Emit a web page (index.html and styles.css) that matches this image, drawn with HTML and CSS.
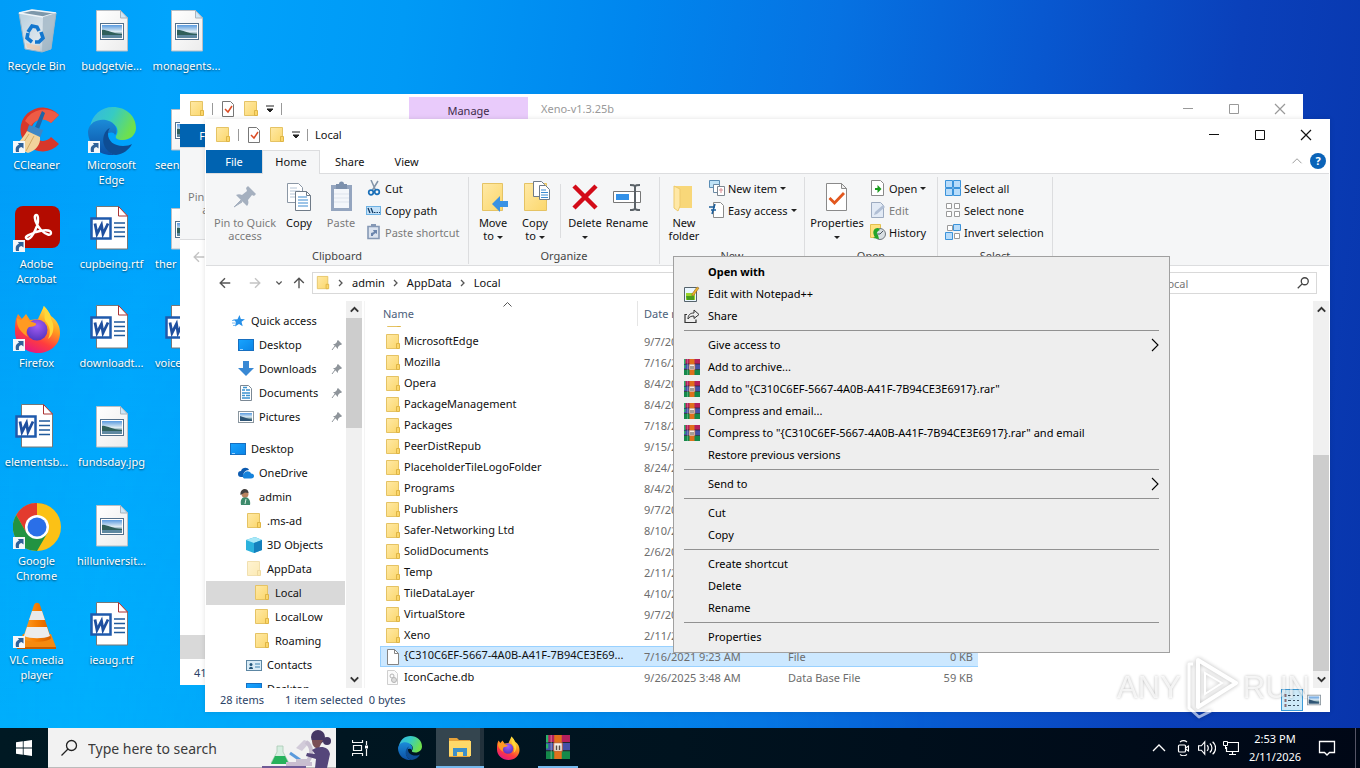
FILE: index.html
```html
<!DOCTYPE html>
<html lang="en">
<head>
<meta charset="utf-8">
<title>Desktop</title>
<link rel="stylesheet" href="styles.css">
</head>
<body>
<svg class="defs" aria-hidden="true">
  <defs>
    <linearGradient id="gPaper" x1="0" y1="0" x2="1" y2="1"><stop offset="0" stop-color="#ffffff"/><stop offset="1" stop-color="#ececec"/></linearGradient>
    <linearGradient id="gPhoto" x1="0" y1="0" x2="0" y2="1"><stop offset="0" stop-color="#5a9be0"/><stop offset=".5" stop-color="#dceaf2"/><stop offset=".75" stop-color="#56808c"/><stop offset="1" stop-color="#35627c"/></linearGradient>
    <linearGradient id="gBin" x1="0" y1="0" x2="1" y2="1"><stop offset="0" stop-color="#b4cddd"/><stop offset=".6" stop-color="#dde6ec"/><stop offset="1" stop-color="#8fa6b6"/></linearGradient>
    <linearGradient id="gEdgeA" x1="0" y1="0" x2="1" y2=".4"><stop offset="0" stop-color="#35b5e5"/><stop offset=".5" stop-color="#36cbc4"/><stop offset="1" stop-color="#6ee04e"/></linearGradient>
    <linearGradient id="gEdgeB" x1="0" y1="0" x2="0" y2="1"><stop offset="0" stop-color="#1b8bd8"/><stop offset="1" stop-color="#0c4fa4"/></linearGradient>
    <linearGradient id="gFox" x1=".8" y1="0" x2=".3" y2="1"><stop offset="0" stop-color="#fff04a"/><stop offset=".4" stop-color="#ff9a1f"/><stop offset=".7" stop-color="#ff3d3d"/><stop offset="1" stop-color="#e31587"/></linearGradient>
    <radialGradient id="gFoxGlobe" cx=".5" cy=".3" r=".8"><stop offset="0" stop-color="#a45cf5"/><stop offset="1" stop-color="#4b30b8"/></radialGradient>
    <linearGradient id="gFolder" x1="0" y1="0" x2="1" y2="1"><stop offset="0" stop-color="#ffe9a6"/><stop offset="1" stop-color="#fbd76c"/></linearGradient>
    <linearGradient id="gCone" x1="0" y1="0" x2="1" y2="0"><stop offset="0" stop-color="#ffa02a"/><stop offset=".5" stop-color="#f57c00"/><stop offset="1" stop-color="#d65f00"/></linearGradient>
    <linearGradient id="gScreen" x1="0" y1="0" x2="1" y2="1"><stop offset="0" stop-color="#18a4ff"/><stop offset="1" stop-color="#0a84e6"/></linearGradient>
  </defs>
  <symbol id="shortcut" viewBox="0 0 12 12"><rect width="12" height="12" fill="#f4f7fa"/><path d="M3 11C2 6 4 4 6 4L5 2h5.500v5.500L8.500 6C6 6.500 5.500 8 6 11z" fill="#2f6199"/></symbol>
  <symbol id="d-image" viewBox="0 0 48 48"><path d="M8.500 2.500h24l7 7.500v33h-31z" fill="url(#gPaper)" stroke="#b9bec4"/><path d="M32.500 2.500v7.500h7z" fill="#cfe6f6" stroke="#a9b4bc"/><rect x="12.500" y="15.500" width="23" height="16" fill="#fff" stroke="#53708c"/><rect x="14" y="17" width="20" height="13" fill="url(#gPhoto)"/><path d="M14 22c4-1 10 4 20 4v4H14z" fill="#2f5f5a"/><path d="M14 27h20v3H14z" fill="#5e88a0"/></symbol>
  <symbol id="d-word" viewBox="0 0 48 48"><path d="M8.500.500h22l9 9.500v33h-31z" fill="#fff" stroke="#777"/><path d="M30.500.500v9.500h9z" fill="#fff" stroke="#a33"/><path d="M26 17h11M26 21.500h11M26 26h11M26 30.500h11" stroke="#1f5a9c" stroke-width="1.500"/><rect x="3.500" y="12.500" width="19" height="20" fill="#fff" stroke="#1f5aac" stroke-width="2.500"/><path d="M7 17.500l2 10.500 4.500-9 1.500 9 5-10.500" fill="none" stroke="#1f4f9f" stroke-width="2.800"/></symbol>
  <symbol id="d-bin" viewBox="0 0 48 48"><path d="M6 5l13-3 24 3-5 36-9 3-17-3z" fill="url(#gBin)" stroke="#9db4c4"/><path d="M6 5l13-3 24 3-13 4z" fill="#7d98ab" stroke="#eef4f8" stroke-width="1.500"/><path d="M30 9l13-4-5 36-9 3z" fill="#a1b6c5" opacity=".8"/><path d="M13 35l14 3v5l-13-3z" fill="#f0c8a8" opacity=".7"/><path d="M15 24l4-6 5 1 2 4M28 24l2 6-4 4h-4M19 34l-5-4 1-5" fill="none" stroke="#1377cf" stroke-width="3.600"/></symbol>
  <symbol id="d-ccleaner" viewBox="0 0 48 48"><path d="M46 8A22 22 0 1 0 46 37L38 30A11 11 0 1 1 38 16z" fill="#d8372a"/><path d="M46 8A22 22 0 0 0 12 14l6 5a13 13 0 0 1 20-3z" fill="#ee5b45"/><path d="M29 4l3 2-6 16-4-2z" fill="#1f66a8"/><path d="M16 18l14 5-3 8-13-7z" fill="#3e87c6"/><path d="M14 24l13 6c1 8-5 14-12 16L1 40c5-5 9-9 13-16z" fill="#f2d39c"/><path d="M16 27L7 41M21 29l-8 15" stroke="#d3a964"/></symbol>
  <symbol id="edge" viewBox="0 0 48 48"><path d="M2 20C4 8 13 0 25 0c13 0 23 9 23 21 0 7-6 12-13 12-6 0-8-2-7-4 3-4 2-12-6-13-9-1-17 4-20 12z" fill="url(#gEdgeA)"/><path d="M0 24C2 13 14 11 21 14c8 3 9 11 6 14-2-5-12-2-11 7 1 7 6 12 12 13C11 50 0 38 0 24z" fill="url(#gEdgeB)"/><path d="M16 28c-3 9 3 19 12 20 7-1 13-5 16-11-2 1-5 2-9 2-9 0-15-5-15-12 0-3 1-5 2-6-3 1-5 4-6 7z" fill="#0e4d94"/></symbol>
  <symbol id="d-acrobat" viewBox="0 0 48 48"><rect x="2" y="0" width="45" height="42" rx="8" fill="#b30b00"/><path d="M13 32c3 4 8-4 11-12 2-6 1-12-1-11-3 1 0 10 5 15 5 5 10 6 10 3 0-4-9-3-15-1-5 2-11 4-10 6z" fill="none" stroke="#fff" stroke-width="2.400"/></symbol>
  <symbol id="firefox" viewBox="0 0 48 48"><path d="M3 14l2-5 4 5 4-5 4 6 8-1 6-13c3 3 5 6 7 10 7 5 9 11 9 17 0 12-10 20-22 20S2 39 2 27c0-5 0-9 1-13z" fill="url(#gFox)"/><circle cx="24" cy="25" r="10.500" fill="url(#gFoxGlobe)"/><path d="M4 13l4 2 5-5 3 6 6 2c3 1 0 4-6 4-2 2-4 6-1 10-6-4-12-9-11-19z" fill="#ff9a22"/><path d="M30 1c4 8-1 12 4 17 3 5 4 10 1 16 6-4 7-14 3-20C37 8 34 4 30 1z" fill="#ffd83a"/></symbol>
  <symbol id="d-chrome" viewBox="0 0 48 48"><circle cx="24" cy="24" r="24" fill="#fbc116"/><path d="M24 0a24 24 0 0 1 20.800 12H24z M24 12h20.800A24 24 0 0 0 3.200 12l10.400 18z" fill="#e33b2e"/><path d="M3.200 12A24 24 0 0 0 24 48l10.400-18H13.600z" fill="#229342"/><circle cx="24" cy="24" r="12" fill="#fff"/><circle cx="24" cy="24" r="9.500" fill="#2a6fe8"/></symbol>
  <symbol id="d-vlc" viewBox="0 0 48 48"><path d="M10 32h28l5 13-39 1z" fill="#f58a10"/><path d="M4 45h39v2H4z" fill="#c65c00"/><path d="M21 3c1-3 5-3 6 0l11 33c-3 5-25 5-28 0z" fill="url(#gCone)"/><path d="M19 9h10l3 9H16z" fill="#e9e9e9"/><path d="M14 25h20l3 9c-6 3-20 3-26 0z" fill="#ececec"/></symbol>
  <symbol id="folder" viewBox="0 0 16 16"><path d="M1.500.500h12v14h-12z" fill="url(#gFolder)" stroke="#e5c364"/><path d="M11.500 9.500h3v5h-3z" fill="#fbd66a" stroke="#dfb545"/></symbol>
  <symbol id="check-doc" viewBox="0 0 16 16"><path d="M2.500.500h8l3 3v12h-11z" fill="#fff" stroke="#777"/><path d="M5 8l3 3 4-6" fill="none" stroke="#dc4b23" stroke-width="1.500"/></symbol>
  <symbol id="check-big" viewBox="0 0 32 32"><path d="M5.500 2.500h15l5 5v22h-20z" fill="#fff" stroke="#8a8a8a"/><path d="M20.500 2.500v5h5z" fill="#eee" stroke="#8a8a8a"/><path d="M8.500 17l5 5L23 12" fill="none" stroke="#e2571e" stroke-width="2.800"/></symbol>
  <symbol id="drop" viewBox="0 0 8 8"><path d="M0 1h8M1 4h6L4 7z" fill="#222" stroke="#222"/></symbol>
  <symbol id="min" viewBox="0 0 12 12"><path d="M1 5.500h10" stroke="currentColor"/></symbol>
  <symbol id="max" viewBox="0 0 12 12"><path d="M1.500 1.500h9v9h-9z" fill="none" stroke="currentColor"/></symbol>
  <symbol id="close" viewBox="0 0 12 12"><path d="M1 1l10 10M11 1L1 11" stroke="currentColor" stroke-width="1.200"/></symbol>
  <symbol id="pin-big" viewBox="0 0 32 32"><path d="M19 5l8 8-2 2-2-1-4 5c1 3 0 5-1 6L7 14c2-1 4-1 6 0l5-4-1-3z" fill="#a5b0bf"/><path d="M12 19L5 26l8-5z" fill="#a5b0bf" stroke="#a5b0bf"/></symbol>
  <symbol id="copy-big" viewBox="0 0 32 32"><path d="M4.500 2.500h11l4 4v15h-15z" fill="#fff" stroke="#8b97a5"/><path d="M7 7h7M7 10h10M7 13h10M7 16h10" stroke="#b6c6d8"/><path d="M12.500 10.500h11l4 4v15h-15z" fill="#fff" stroke="#6f7b88"/><path d="M23.500 10.500v4h4" fill="none" stroke="#6f7b88"/><path d="M15 16h9M15 19h10M15 22h10M15 25h10" stroke="#3c8bd0"/></symbol>
  <symbol id="paste-big" viewBox="0 0 32 32"><rect x="6" y="4" width="21" height="26" fill="#94a5bf"/><rect x="9" y="8" width="15" height="19" fill="#f3f6fa"/><path d="M11 3h3a2.500 2.500 0 0 1 5 0h3v5H11z" fill="#7c90ac"/><path d="M9 13h15M9 17h15M9 21h15" stroke="#dde3ec"/></symbol>
  <symbol id="scissors" viewBox="0 0 16 16"><path d="M5 0l4.500 10M12 1L6.500 10" stroke="#8294a8" stroke-width="1.500"/><circle cx="5" cy="12.500" r="2.300" fill="none" stroke="#1a6fb8" stroke-width="1.700"/><circle cx="11" cy="12" r="2.300" fill="none" stroke="#1a6fb8" stroke-width="1.700"/></symbol>
  <symbol id="copypath" viewBox="0 0 16 16"><rect x=".5" y="4.500" width="14" height="8" fill="#c3e1f8" stroke="#6cb1e4"/><path d="M2 6l2 5M5 6l2 5" stroke="#123a63" stroke-width="1.300"/><path d="M8 10.500h1.500M10.500 10.500h1.500M13 10.500h1" stroke="#123a63"/></symbol>
  <symbol id="pasteshort" viewBox="0 0 16 16"><path d="M2 2.500h11v12H2z" fill="#dbe3ef" stroke="#8598b5" stroke-width="1.600"/><path d="M5 0h5v3H5z" fill="#8598b5"/><path d="M5 12V9l3-1-1-2h4v4l-1.500-1L7 11v1z" fill="#6b85ad"/></symbol>
  <symbol id="moveto" viewBox="0 0 32 32"><path d="M5.500 2.500h20v27h-20z" fill="url(#gFolder)" stroke="#e5c364"/><path d="M31 20h-8v-5l-8 8 8 8v-5h8z" fill="#3a92e4"/></symbol>
  <symbol id="copyto" viewBox="0 0 32 32"><path d="M5.500 2.500h22v27h-22z" fill="url(#gFolder)" stroke="#e5c364"/><path d="M14.500.500h8l3 3v12h-11z" fill="#fff" stroke="#6f7b88"/><path d="M20.500 4.500h6l4 4v10h-10z" fill="#fff" stroke="#6f7b88"/><path d="M22 9h5M22 11.500h7M22 14h7M22 16.500h7" stroke="#3c8bd0"/></symbol>
  <symbol id="delete" viewBox="0 0 32 32"><path d="M5 5l22 22M27 5L5 27" stroke="#d30b18" stroke-width="4.500"/></symbol>
  <symbol id="rename" viewBox="0 0 32 32"><path d="M2.500 10.500h27v11h-27z" fill="#fff" stroke="#777"/><path d="M5 13h13v6H5z" fill="#3391e8"/><path d="M19 4c3 0 5 0 5 2v21c0 2-2 2-5 2M29 4c-3 0-5 0-5 2v21c0 2 2 2 5 2" fill="none" stroke="#5b6268" stroke-width="2"/></symbol>
  <symbol id="newfolder" viewBox="0 0 32 32"><path d="M6 5h18v22H10z" fill="#f8d779"/><path d="M6 5l6 3v17l-2 5-4-3z" fill="#ffe8a6" stroke="#edca6d"/></symbol>
  <symbol id="newitem" viewBox="0 0 16 16"><path d="M.5.500h10v7h-10z" fill="#bfe3f7" stroke="#5a8db5"/><path d="M4.500 4.500h6v8h-6z" fill="#fff" stroke="#6b8aa4"/><path d="M8.500 6.500h7v9h-7z" fill="#fff" stroke="#7d8790"/><path d="M10 10h4M12 8v5" stroke="#db8b92"/></symbol>
  <symbol id="easy" viewBox="0 0 16 16"><path d="M4.500.500h7l3 3v12h-10z" fill="#fff" stroke="#8a8a8a"/><path d="M0 5h6M2 8h5M6 2L3 12" stroke="#1b5e9b" stroke-width="1.500"/></symbol>
  <symbol id="open" viewBox="0 0 16 16"><path d="M1.500.500h9l3 3v12h-12z" fill="#fff" stroke="#8a8a8a"/><path d="M5 8h2.500V5l4 4-4 4v-3H5z" fill="#189b1c"/></symbol>
  <symbol id="edit" viewBox="0 0 16 16"><path d="M1.500.500h9l3 3v12h-12z" fill="#e2eaf5" stroke="#9dabc0"/><path d="M4 13l1-3 8-7 2 2-8 7z" fill="#b0bed4"/></symbol>
  <symbol id="history" viewBox="0 0 16 16"><path d="M.500.500h10v13h-10z" fill="#ffe17e" stroke="#e2c04e"/><circle cx="10" cy="10" r="5.500" fill="#d9dfe3" stroke="#70787e"/><path d="M10 10l3-3M10 10H7" stroke="#4b5560"/><path d="M8 4C3 4 2 9 5 13l-2 1 6 1-1-4c-2-1-1-4 2-5z" fill="#23a52a"/></symbol>
  <symbol id="selall" viewBox="0 0 16 16"><path d="M.500.500h7v7h-7zM8.500.500h7v7h-7zM.500 8.500h7v7h-7zM8.500 8.500h7v7h-7z" fill="#b8dcfa" stroke="#3b93da"/></symbol>
  <symbol id="selnone" viewBox="0 0 16 16"><path d="M1.500 1.500h5v5h-5zM9.500 1.500h5v5h-5zM1.500 9.500h5v5h-5zM9.500 9.500h5v5h-5z" fill="#fff" stroke="#9a9a9a"/></symbol>
  <symbol id="selinv" viewBox="0 0 16 16"><path d="M2.500 1.500h5v5h-5zM9.500 9.500h5v5h-5z" fill="#fff" stroke="#9a9a9a"/><path d="M8.500.500h7v6h-7zM.500 8.500h7v7h-7z" fill="#b8dcfa" stroke="#3b93da"/></symbol>
  <symbol id="left" viewBox="0 0 16 16"><path d="M14 8H2.500M8 2.500L2.500 8 8 13.500" fill="none" stroke="currentColor" stroke-width="1.600"/></symbol>
  <symbol id="chev" viewBox="0 0 16 16"><path d="M4.500 6l3.500 3.500L11.500 6" fill="none" stroke="currentColor" stroke-width="1.600"/></symbol>
  <symbol id="right" viewBox="0 0 8 16"><path d="M2 5l3 3-3 3" fill="none" stroke="currentColor" stroke-width="1.300"/></symbol>
  <symbol id="sub" viewBox="0 0 8 16"><path d="M1 2l6 6-6 6" fill="none" stroke="currentColor" stroke-width="1.100"/></symbol>
  <symbol id="lens" viewBox="0 0 16 16"><circle cx="10" cy="6" r="4" fill="none" stroke="currentColor" stroke-width="1.500"/><path d="M7 9l-5 5" stroke="currentColor" stroke-width="1.500"/></symbol>
  <symbol id="lens-thin" viewBox="0 0 18 18"><circle cx="11.500" cy="6.500" r="5" fill="none" stroke="currentColor" stroke-width="1.300"/><path d="M8 10l-6.500 6.500" stroke="currentColor" stroke-width="1.300"/></symbol>
  <symbol id="star" viewBox="0 0 16 16"><path d="M9.500 2l1.300 4 4.200.2-3.500 2.600 1.200 4.500-3.700-2.400L5 13.500l1-4.500L3 6.500l4.500-.3z" fill="#2690e8"/><path d="M2 10h4M3 12.500h2M2 7.500h3" stroke="#7cbdf2"/></symbol>
  <symbol id="screen" viewBox="0 0 16 16"><rect x=".5" y="2.500" width="15" height="11" fill="url(#gScreen)" stroke="#176fc0"/><path d="M2 12.500h3" stroke="#9ad2ff"/></symbol>
  <symbol id="downarrow" viewBox="0 0 16 16"><path d="M5 0h6v7h5l-8 8-8-8h5z" fill="#3888d4"/></symbol>
  <symbol id="doc" viewBox="0 0 16 16"><path d="M2.500.500h8l3 3v12h-11z" fill="#fff" stroke="#7b8894"/><path d="M4 5h3M8 5h4M4 8h8M4 10.500h3M8 10.500h4M4 13h8M5 2.500h4" stroke="#3c93cf" stroke-width="1.300"/></symbol>
  <symbol id="photo" viewBox="0 0 16 16"><rect x=".5" y="2.500" width="15" height="11" fill="#fff" stroke="#8a969f"/><path d="M2 4h12v8H2z" fill="url(#gPhoto)"/><path d="M2 7l12 4v1H2z" fill="#2f5575"/></symbol>
  <symbol id="cloud" viewBox="0 0 16 16"><path d="M3 12a3 3 0 0 1 0-6c1-4 7-4 8-1-4 0-6 3-6 7z" fill="#0c5bb0"/><path d="M6 13.500a3 3 0 0 1 0-5c1-3 6-3 7 0 4 0 4 5 0 5z" fill="#1683dc"/></symbol>
  <symbol id="user" viewBox="0 0 16 16"><path d="M3 16c-1-5 1-8 4-8s6 3 5 8z" fill="#3d8a6b"/><circle cx="7" cy="5" r="3.500" fill="#b9835f"/><path d="M2.500 6c-1-7 8-8 8-2L7 3.500z" fill="#43403e"/><path d="M8 10l-1 5" stroke="#d9eee2"/></symbol>
  <symbol id="cube" viewBox="0 0 16 16"><path d="M0 3l9-3 7 3v10l-8 3-8-3z" fill="#2bb2dd"/><path d="M0 3l9-3 7 3-8 3z" fill="#a8e8f7"/><path d="M8 6l8-3v10l-8 3z" fill="#1580bd"/></symbol>
  <symbol id="contact" viewBox="0 0 16 16"><rect x=".5" y="3.500" width="15" height="10" fill="#d9ecf7" stroke="#5c86a3"/><path d="M3 12c0-3 4-3 4 0z" fill="#24577b"/><circle cx="5" cy="7.500" r="1.500" fill="#24577b"/><path d="M9 7h5M9 10h5" stroke="#3f83b0"/></symbol>
  <symbol id="pin" viewBox="0 0 12 12"><path d="M7 1l4 4-1 1h-1L7 8v2L2 5h2l2-2V2z" fill="#8f959b"/><path d="M4 7L1 11" stroke="#8f959b"/></symbol>
  <symbol id="blank" viewBox="0 0 16 16"><path d="M2.500.500h7l4 4v11h-11z" fill="#fff" stroke="#858585"/><path d="M9.500.500v4h4" fill="none" stroke="#858585"/></symbol>
  <symbol id="dbfile" viewBox="0 0 16 16"><path d="M2.500.500h7l3 3v11h-10z" fill="#fafafa" stroke="#cfcfcf"/><circle cx="7" cy="6" r="2" fill="none" stroke="#b4b4b4"/><circle cx="9" cy="10" r="2.500" fill="#ddd" stroke="#b4b4b4"/></symbol>
  <symbol id="details" viewBox="0 0 16 16"><path d="M1.500 2v13" stroke="#8a6d75" stroke-width="2" stroke-dasharray="3 2"/><path d="M4 3.500h3M9 3.500h2M13 3.500h2M4 8.500h3M9 8.500h2M13 8.500h2M4 13.500h3M9 13.500h2M13 13.500h2" stroke="#3c5060"/></symbol>
  <symbol id="npp" viewBox="0 0 16 16"><path d="M.5 1.500h12v14H.5z" fill="#eaf6ff" stroke="#55636b"/><path d="M2 7h9v7H2z" fill="#9bd52b"/><path d="M2 10h8v4H3z" fill="#4a9c1f"/><path d="M8 8l5-7 2 1-5 7-2 1z" fill="#f1b32c" stroke="#8a6624" stroke-width=".6"/></symbol>
  <symbol id="share" viewBox="0 0 16 16"><path d="M3 6.500H1v8h11v-3" fill="none" stroke="#333" stroke-width="1.200"/><path d="M4 11c0-4 2-6 6-6V2l5 4.500-5 4V8c-3 0-5 1-6 3z" fill="none" stroke="#333"/></symbol>
  <symbol id="rar" viewBox="0 0 16 16"><path d="M0 0h16v5H0z" fill="#b4205c"/><path d="M0 5h16v5.500H0z" fill="#4451a8"/><path d="M0 10.500h16V16H0z" fill="#14894a"/><path d="M0 5h16M0 10.500h16" stroke="#23262b" stroke-width=".7"/><path d="M0 0h1.500v5H0zM0 6h1.500v3H0z" fill="#2ab36a"/><path d="M3 0h1v16H3z" fill="#fff" opacity=".25"/><path d="M5.500 0h5v16h-5z" fill="#e0701c"/><path d="M4.800 5h6.400v6H4.800z" fill="#b8664a"/><path d="M5.500 5.500h5v5h-5z" fill="#f5efe6"/><path d="M7 7v3M9 7v3" stroke="#584b46"/></symbol>
  <symbol id="win" viewBox="0 0 16 16"><path d="M0 2.300l6.800-1v6.200H0zM7.600 1.200L16 0v7.500H7.600zM0 8.400h6.800v6.300l-6.800-1zM7.600 8.400H16V16l-8.400-1.200z" fill="#fff"/></symbol>
  <symbol id="taskview" viewBox="0 0 16 16"><path d="M.5 0v2.500h10V0M.5 16v-2.500h10V16M1.500 5.500h8v5h-8zM14.500 1v4M14.500 9v7" fill="none" stroke="#f4f4f4" stroke-width="1.200"/><path d="M13 5.500h3v3h-3z" fill="#fff"/></symbol>
  <symbol id="explorer" viewBox="0 0 24 24"><path d="M1 3h8l2 2h11v17H1z" fill="#e8a33a"/><path d="M1 6h22v15H1z" fill="#ffd869"/><path d="M5 21v-8h14v8h-4v-4H9v4z" fill="#3d8fc9"/></symbol>
  <symbol id="up" viewBox="0 0 16 16"><path d="M2 11l6-6 6 6" fill="none" stroke="currentColor" stroke-width="1.300"/></symbol>
  <symbol id="up-bold" viewBox="0 0 16 16"><path d="M4.500 10L8 6.500l3.500 3.500" fill="none" stroke="currentColor" stroke-width="1.800"/></symbol>
  <symbol id="cam" viewBox="0 0 16 16"><rect x="3.500" y="5" width="7" height="7" rx="1" fill="none" stroke="#fff" stroke-width="1.200"/><path d="M10.500 8l3-2v5l-3-2M5 2c2-1.500 5-1.500 7 0M5 14.500c2 1.500 5 1.500 7 0" fill="none" stroke="#fff" stroke-width="1.100"/></symbol>
  <symbol id="vol" viewBox="0 0 16 16"><path d="M.5 6h2.500l3-3.500v11L3 10H.5z" fill="none" stroke="#fff"/><path d="M8 5.500c1.500 1 1.500 4 0 5M10.500 4c2.500 2 2.500 6 0 8M13 2.500c3.500 3 3.500 8 0 11" fill="none" stroke="#fff" stroke-width="1.100"/></symbol>
  <symbol id="net" viewBox="0 0 16 16"><path d="M5 2.500h10.500v9H3.500V7M9.500 11.500v3M6 14.500h7" fill="none" stroke="#fff" stroke-width="1.200"/><path d="M.5 1.500h4v4h-4zM2.500 5.500V9" fill="none" stroke="#fff"/></symbol>
  <symbol id="note" viewBox="0 0 18 18"><path d="M1.500 2.500h15v11h-5l-2.500 2.500L6.500 13.500h-5z" fill="none" stroke="#fff" stroke-width="1.300"/></symbol>
</svg>

<main class="desktop">
  <div class="beam"></div>
  <div class="icons">
    <button class="dicon"><span class="pic"><svg><use href="#d-bin"/></svg></span><span>Recycle Bin</span></button>
    <button class="dicon"><span class="pic"><svg><use href="#d-ccleaner"/></svg><svg class="sc"><use href="#shortcut"/></svg></span><span>CCleaner</span></button>
    <button class="dicon"><span class="pic"><svg><use href="#d-acrobat"/></svg><svg class="sc"><use href="#shortcut"/></svg></span><span>Adobe<br>Acrobat</span></button>
    <button class="dicon"><span class="pic"><svg><use href="#firefox"/></svg><svg class="sc"><use href="#shortcut"/></svg></span><span>Firefox</span></button>
    <button class="dicon"><span class="pic"><svg><use href="#d-word"/></svg></span><span>elementsb...</span></button>
    <button class="dicon"><span class="pic"><svg><use href="#d-chrome"/></svg><svg class="sc"><use href="#shortcut"/></svg></span><span>Google<br>Chrome</span></button>
    <button class="dicon"><span class="pic"><svg><use href="#d-vlc"/></svg><svg class="sc"><use href="#shortcut"/></svg></span><span>VLC media<br>player</span></button>
    <button class="dicon"><span class="pic"><svg><use href="#d-image"/></svg></span><span>budgetvie...</span></button>
    <button class="dicon"><span class="pic"><svg><use href="#edge"/></svg><svg class="sc"><use href="#shortcut"/></svg></span><span>Microsoft<br>Edge</span></button>
    <button class="dicon"><span class="pic"><svg><use href="#d-word"/></svg></span><span>cupbeing.rtf</span></button>
    <button class="dicon"><span class="pic"><svg><use href="#d-word"/></svg></span><span>downloadt...</span></button>
    <button class="dicon"><span class="pic"><svg><use href="#d-image"/></svg></span><span>fundsday.jpg</span></button>
    <button class="dicon"><span class="pic"><svg><use href="#d-image"/></svg></span><span>hilluniversit...</span></button>
    <button class="dicon"><span class="pic"><svg><use href="#d-word"/></svg></span><span>ieaug.rtf</span></button>
    <button class="dicon"><span class="pic"><svg><use href="#d-image"/></svg></span><span>monagents...</span></button>
    <button class="dicon"><span class="pic"><svg><use href="#d-image"/></svg></span><span class="cut">seen</span></button>
    <button class="dicon"><span class="pic"><svg><use href="#d-image"/></svg></span><span class="cut">ther</span></button>
    <button class="dicon"><span class="pic"><svg><use href="#d-word"/></svg></span><span class="cut">voice</span></button>
  </div>

  <section class="window back">
    <header class="titlebar">
      <div class="qat"><svg class="i16"><use href="#folder"/></svg><i class="bar"></i><svg class="i16"><use href="#check-doc"/></svg><svg class="i16"><use href="#folder"/></svg><svg class="i8"><use href="#drop"/></svg><i class="bar"></i></div>
      <span class="manage">Manage</span>
      <h2 class="title">Xeno-v1.3.25b</h2>
      <div class="controls"><button aria-label="Minimize"><svg class="i12"><use href="#min"/></svg></button><button aria-label="Maximize"><svg class="i12"><use href="#max"/></svg></button><button aria-label="Close"><svg class="i12"><use href="#close"/></svg></button></div>
    </header>
    <nav class="tabs"><button class="file">File</button></nav>
    <div class="ribbon"><div class="group"><div class="group-body first"><button class="big pinq dim"><svg class="i32"><use href="#pin-big"/></svg><span>Pin to Quick<br>access</span></button></div><div class="group-label">&nbsp;</div></div></div>
    <div class="address"><button class="nav-btn off" aria-label="Back"><svg class="i16"><use href="#left"/></svg></button></div>
    <div class="back-body"><div class="back-sel"></div></div>
    <footer class="status"><span>41 items</span></footer>
  </section>

  <section class="window front">
    <header class="titlebar">
      <div class="qat"><svg class="i16"><use href="#folder"/></svg><i class="bar"></i><svg class="i16"><use href="#check-doc"/></svg><svg class="i16"><use href="#folder"/></svg><svg class="i8"><use href="#drop"/></svg><i class="bar"></i></div>
      <h1 class="title">Local</h1>
      <div class="controls"><button aria-label="Minimize"><svg class="i12"><use href="#min"/></svg></button><button aria-label="Maximize"><svg class="i12"><use href="#max"/></svg></button><button aria-label="Close"><svg class="i12"><use href="#close"/></svg></button></div>
    </header>
    <nav class="tabs">
      <button class="file">File</button><button class="on">Home</button><button>Share</button><button>View</button>
      <span class="tab-end"><svg class="i16 grey"><use href="#up"/></svg><button class="help" aria-label="Help">?</button></span>
    </nav>
    <div class="ribbon">
      <div class="group g-clip">
        <div class="group-body first">
          <button class="big pinq dim"><svg class="i32"><use href="#pin-big"/></svg><span>Pin to Quick<br>access</span></button>
          <button class="big w36"><svg class="i32"><use href="#copy-big"/></svg><span>Copy</span></button>
          <button class="big dim"><svg class="i32"><use href="#paste-big"/></svg><span>Paste</span></button>
          <div class="smalls">
            <button><svg class="i16"><use href="#scissors"/></svg>Cut</button>
            <button><svg class="i16"><use href="#copypath"/></svg>Copy path</button>
            <button class="dim"><svg class="i16"><use href="#pasteshort"/></svg>Paste shortcut</button>
          </div>
        </div>
        <div class="group-label">Clipboard</div>
      </div>
      <div class="group g-org">
        <div class="group-body">
          <button class="big"><svg class="i32"><use href="#moveto"/></svg><span>Move<br>to <i class="tri"></i></span></button>
          <button class="big w36"><svg class="i32"><use href="#copyto"/></svg><span>Copy<br>to <i class="tri"></i></span></button>
          <i class="inner-sep"></i>
          <button class="big"><svg class="i32"><use href="#delete"/></svg><span>Delete<br><i class="tri"></i></span></button>
          <button class="big w36"><svg class="i32"><use href="#rename"/></svg><span>Rename</span></button>
        </div>
        <div class="group-label">Organize</div>
      </div>
      <div class="group g-new">
        <div class="group-body">
          <button class="big"><svg class="i32"><use href="#newfolder"/></svg><span>New<br>folder</span></button>
          <div class="smalls">
            <button><svg class="i16"><use href="#newitem"/></svg>New item <i class="tri"></i></button>
            <button><svg class="i16"><use href="#easy"/></svg>Easy access <i class="tri"></i></button>
          </div>
        </div>
        <div class="group-label">New</div>
      </div>
      <div class="group g-open">
        <div class="group-body">
          <button class="big w64"><svg class="i32"><use href="#check-big"/></svg><span>Properties<br><i class="tri"></i></span></button>
          <div class="smalls">
            <button><svg class="i16"><use href="#open"/></svg>Open <i class="tri"></i></button>
            <button class="dim"><svg class="i16"><use href="#edit"/></svg>Edit</button>
            <button><svg class="i16"><use href="#history"/></svg>History</button>
          </div>
        </div>
        <div class="group-label">Open</div>
      </div>
      <div class="group g-sel">
        <div class="group-body">
          <div class="smalls">
            <button><svg class="i16"><use href="#selall"/></svg>Select all</button>
            <button><svg class="i16"><use href="#selnone"/></svg>Select none</button>
            <button><svg class="i16"><use href="#selinv"/></svg>Invert selection</button>
          </div>
        </div>
        <div class="group-label">Select</div>
      </div>
    </div>
    <div class="address">
      <button class="nav-btn" aria-label="Back"><svg class="i16"><use href="#left"/></svg></button>
      <button class="nav-btn off flip" aria-label="Forward"><svg class="i16"><use href="#left"/></svg></button>
      <button class="nav-btn recent" aria-label="Recent"><svg class="i12"><use href="#chev"/></svg></button>
      <button class="nav-btn turn" aria-label="Up"><svg class="i16"><use href="#left"/></svg></button>
      <div class="crumbs"><svg class="i16"><use href="#folder"/></svg><svg class="sep"><use href="#right"/></svg><a href="#">admin</a><svg class="sep"><use href="#right"/></svg><a href="#">AppData</a><svg class="sep"><use href="#right"/></svg><a href="#">Local</a></div>
      <label class="search"><input type="text" aria-label="Search Local" placeholder="Search Local"><svg class="i16"><use href="#lens"/></svg></label>
    </div>
    <div class="content">
      <div class="tree">
        <a href="#" class="l0"><svg class="i16"><use href="#star"/></svg>Quick access</a>
        <a href="#" class="l1"><svg class="i16"><use href="#screen"/></svg>Desktop<svg class="i12 pinned"><use href="#pin"/></svg></a>
        <a href="#" class="l1"><svg class="i16"><use href="#downarrow"/></svg>Downloads<svg class="i12 pinned"><use href="#pin"/></svg></a>
        <a href="#" class="l1"><svg class="i16"><use href="#doc"/></svg>Documents<svg class="i12 pinned"><use href="#pin"/></svg></a>
        <a href="#" class="l1"><svg class="i16"><use href="#photo"/></svg>Pictures<svg class="i12 pinned"><use href="#pin"/></svg></a>
        <a href="#" class="l0 gap"><svg class="i16"><use href="#screen"/></svg>Desktop</a>
        <a href="#" class="l1"><svg class="i16"><use href="#cloud"/></svg>OneDrive</a>
        <a href="#" class="l1"><svg class="i16"><use href="#user"/></svg>admin</a>
        <a href="#" class="l2"><svg class="i16"><use href="#folder"/></svg>.ms-ad</a>
        <a href="#" class="l2"><svg class="i16"><use href="#cube"/></svg>3D Objects</a>
        <a href="#" class="l2"><svg class="i16 faint"><use href="#folder"/></svg>AppData</a>
        <a href="#" class="l3 sel"><svg class="i16"><use href="#folder"/></svg>Local</a>
        <a href="#" class="l3"><svg class="i16"><use href="#folder"/></svg>LocalLow</a>
        <a href="#" class="l3"><svg class="i16"><use href="#folder"/></svg>Roaming</a>
        <a href="#" class="l2"><svg class="i16"><use href="#contact"/></svg>Contacts</a>
        <a href="#" class="l2"><svg class="i16"><use href="#screen"/></svg>Desktop</a>
      </div>
      <div class="scroll"><svg><use href="#up-bold"/></svg><i class="thumb tree-thumb"></i><svg class="down"><use href="#up-bold"/></svg></div>
      <div class="list">
        <table>
          <thead><tr><th class="c-name">Name<svg class="sort" viewBox="0 0 9 5"><path d="M.5 4.500l4-4 4 4" fill="none" stroke="currentColor"/></svg></th><th class="c-date">Date modified</th><th class="c-type">Type</th><th class="c-size">Size</th></tr></thead>
          <tbody>
            <tr><td colspan="4"><div class="sliver"><svg class="i16"><use href="#folder"/></svg></div></td></tr>
            <tr><td class="c-name"><svg class="i16"><use href="#folder"/></svg>MicrosoftEdge</td><td>9/7/2021 8:41 AM</td><td>File folder</td><td></td></tr>
            <tr><td class="c-name"><svg class="i16"><use href="#folder"/></svg>Mozilla</td><td>7/16/2021 9:23 AM</td><td>File folder</td><td></td></tr>
            <tr><td class="c-name"><svg class="i16"><use href="#folder"/></svg>Opera</td><td>8/4/2021 8:41 AM</td><td>File folder</td><td></td></tr>
            <tr><td class="c-name"><svg class="i16"><use href="#folder"/></svg>PackageManagement</td><td>8/4/2021 8:41 AM</td><td>File folder</td><td></td></tr>
            <tr><td class="c-name"><svg class="i16"><use href="#folder"/></svg>Packages</td><td>7/18/2021 8:41 AM</td><td>File folder</td><td></td></tr>
            <tr><td class="c-name"><svg class="i16"><use href="#folder"/></svg>PeerDistRepub</td><td>9/15/2021 8:41 AM</td><td>File folder</td><td></td></tr>
            <tr><td class="c-name"><svg class="i16"><use href="#folder"/></svg>PlaceholderTileLogoFolder</td><td>8/24/2021 8:41 AM</td><td>File folder</td><td></td></tr>
            <tr><td class="c-name"><svg class="i16"><use href="#folder"/></svg>Programs</td><td>8/4/2021 8:41 AM</td><td>File folder</td><td></td></tr>
            <tr><td class="c-name"><svg class="i16"><use href="#folder"/></svg>Publishers</td><td>9/7/2021 8:41 AM</td><td>File folder</td><td></td></tr>
            <tr><td class="c-name"><svg class="i16"><use href="#folder"/></svg>Safer-Networking Ltd</td><td>8/10/2021 8:41 AM</td><td>File folder</td><td></td></tr>
            <tr><td class="c-name"><svg class="i16"><use href="#folder"/></svg>SolidDocuments</td><td>2/6/2021 8:41 AM</td><td>File folder</td><td></td></tr>
            <tr><td class="c-name"><svg class="i16"><use href="#folder"/></svg>Temp</td><td>2/11/2026 2:53 PM</td><td>File folder</td><td></td></tr>
            <tr><td class="c-name"><svg class="i16"><use href="#folder"/></svg>TileDataLayer</td><td>4/10/2021 8:41 AM</td><td>File folder</td><td></td></tr>
            <tr><td class="c-name"><svg class="i16"><use href="#folder"/></svg>VirtualStore</td><td>9/7/2021 8:41 AM</td><td>File folder</td><td></td></tr>
            <tr><td class="c-name"><svg class="i16"><use href="#folder"/></svg>Xeno</td><td>2/11/2026 2:53 PM</td><td>File folder</td><td></td></tr>
            <tr class="sel"><td class="c-name"><svg class="i16"><use href="#blank"/></svg>{C310C6EF-5667-4A0B-A41F-7B94CE3E69...</td><td>7/16/2021 9:23 AM</td><td>File</td><td>0 KB</td></tr>
            <tr><td class="c-name"><svg class="i16"><use href="#dbfile"/></svg>IconCache.db</td><td>9/26/2025 3:48 AM</td><td>Data Base File</td><td>59 KB</td></tr>
          </tbody>
        </table>
      </div>
      <div class="scroll"><svg><use href="#up-bold"/></svg><i class="thumb list-thumb"></i><svg class="down"><use href="#up-bold"/></svg></div>
    </div>
    <footer class="status"><span>28 items</span><span>1 item selected&nbsp; 0 bytes</span><div class="views"><button class="on" aria-label="Details"><svg class="i16"><use href="#details"/></svg></button><button aria-label="Large icons"><svg class="i14"><use href="#photo"/></svg></button></div></footer>
  </section>

  <div class="menu" role="menu">
    <button role="menuitem"><b>Open with</b></button>
    <button role="menuitem"><svg class="i16"><use href="#npp"/></svg>Edit with Notepad++</button>
    <button role="menuitem"><svg class="i16"><use href="#share"/></svg>Share</button>
    <hr>
    <button role="menuitem">Give access to<svg class="arrow"><use href="#sub"/></svg></button>
    <button role="menuitem"><svg class="i16"><use href="#rar"/></svg>Add to archive...</button>
    <button role="menuitem"><svg class="i16"><use href="#rar"/></svg>Add to "{C310C6EF-5667-4A0B-A41F-7B94CE3E6917}.rar"</button>
    <button role="menuitem"><svg class="i16"><use href="#rar"/></svg>Compress and email...</button>
    <button role="menuitem"><svg class="i16"><use href="#rar"/></svg>Compress to "{C310C6EF-5667-4A0B-A41F-7B94CE3E6917}.rar" and email</button>
    <button role="menuitem">Restore previous versions</button>
    <hr>
    <button role="menuitem">Send to<svg class="arrow"><use href="#sub"/></svg></button>
    <hr>
    <button role="menuitem">Cut</button>
    <button role="menuitem">Copy</button>
    <hr>
    <button role="menuitem">Create shortcut</button>
    <button role="menuitem">Delete</button>
    <button role="menuitem">Rename</button>
    <hr>
    <button role="menuitem">Properties</button>
  </div>

  <div class="watermark"><span>ANY</span><svg viewBox="0 0 56 64"><path d="M14 4l38 23-38 24z" fill="none" stroke="#fff" stroke-width="4" stroke-linejoin="round"/><path d="M9 8H5v44l10 9 12-6" fill="none" stroke="#fff" stroke-width="3" stroke-linejoin="round"/><path d="M21 17v21l17-11z" fill="none" stroke="#fff" stroke-width="2"/></svg><span>RUN</span></div>
</main>

<footer class="taskbar">
  <button class="start" aria-label="Start"><svg class="i16"><use href="#win"/></svg></button>
  <label class="tsearch"><svg class="lens"><use href="#lens-thin"/></svg><input type="text" aria-label="Type here to search" placeholder="Type here to search">
    <svg class="art" viewBox="0 0 74 40"><path d="M0 38h44v2H0z" fill="#6f5b96"/><path d="M15 18h6v6l6 11H9l6-11z" fill="#d6eee0" stroke="#a8c9b4" stroke-width=".8"/><path d="M13 28h10l4 8H9z" fill="#27b25c"/><path d="M28 25l10 7" stroke="#5b9bdc" stroke-width="3"/><path d="M24 34h26v4H24z" fill="#c9bdd0"/><path d="M34 20l8-8 6 2-8 9z" fill="#d2cbd9"/><path d="M44 14c6 4 7 12 2 19H34" fill="none" stroke="#c8bfd0" stroke-width="4"/><circle cx="56" cy="9" r="7" fill="#453763"/><path d="M50 12c0 6 3 9 7 8l4-8z" fill="#7a4f55"/><circle cx="65" cy="13" r="4" fill="#453763"/><path d="M50 22c7-5 17-4 18 4l-3 14H53l1-9-10-3 1-3 8 1z" fill="#55467a"/></svg>
  </label>
  <button class="tb" aria-label="Task view"><svg class="i16"><use href="#taskview"/></svg></button>
  <button class="tb wide" aria-label="Edge"><svg class="i24"><use href="#edge"/></svg></button>
  <button class="tb active" aria-label="File Explorer"><svg class="i24"><use href="#explorer"/></svg></button>
  <button class="tb" aria-label="Firefox"><svg class="i24"><use href="#firefox"/></svg></button>
  <button class="tb running" aria-label="WinRAR"><svg class="i24"><use href="#rar"/></svg></button>
  <div class="tray">
    <button aria-label="Show hidden icons"><svg class="i16"><use href="#up"/></svg></button><button aria-label="Meet now"><svg class="i16"><use href="#cam"/></svg></button><button aria-label="Volume"><svg class="i18"><use href="#vol"/></svg></button><button aria-label="Network"><svg class="i16"><use href="#net"/></svg></button>
    <div class="clock"><span>2:53 PM</span><span>2/11/2026</span></div>
    <button class="note" aria-label="Notifications"><svg class="i18"><use href="#note"/></svg></button>
    <i class="show-desktop"></i>
  </div>
</footer>
</body>
</html>
```
FILE: styles.css
```css
* { box-sizing: border-box; }
html, body { height: 100%; margin: 0; }
body {
  display: flex;
  flex-direction: column;
  overflow: hidden;
  font: 11px/15px "Noto Sans", "Open Sans", sans-serif;
  color: #111;
}
button, input { font: inherit; color: inherit; }
button { border: 0; padding: 0; margin: 0; background: none; }
a { color: inherit; text-decoration: none; }
svg { flex: none; display: block; }
.defs { position: absolute; width: 0; height: 0; }
.i8 { width: 8px; height: 8px; }
.i12 { width: 12px; height: 12px; }
.i14 { width: 14px; height: 14px; }
.i16 { width: 16px; height: 16px; }
.i18 { width: 18px; height: 18px; }
.i24 { width: 24px; height: 24px; }
.i32 { width: 32px; height: 32px; }
.dim { color: #7b7b7b; }
.grey { color: #999; }
.faint { opacity: .5; }

/* desktop */
.desktop {
  position: relative;
  flex: 1;
  overflow: hidden;
  background: linear-gradient(97deg, #009df8 0%, #00a4fd 12%, #009af6 28%, #0086ee 44%, #0672e2 58%, #0858d0 72%, #0a40ba 86%, #0835ac 100%);
}
.beam {
  position: absolute;
  inset: 0;
  background: linear-gradient(0deg, rgba(0, 200, 255, .35), transparent 75%);
  mask-image: linear-gradient(90deg, #000, transparent 70%);
}
.icons {
  position: relative;
  display: grid;
  grid-auto-flow: column;
  grid-template-rows: repeat(7, 99px);
  grid-auto-columns: 75px;
  justify-content: start;
}
.dicon {
  display: flex;
  flex-direction: column;
  align-items: center;
  gap: 2px;
  padding: 8px 2px 0 0;
  color: #fff;
  white-space: nowrap;
  text-shadow: 0 1px 2px rgba(0, 0, 0, .6);
}
.dicon .cut { align-self: flex-start; padding-left: 5px; }
.pic { position: relative; width: 48px; height: 48px; }
.pic svg { width: 48px; height: 48px; }
.pic .sc { position: absolute; left: 0; bottom: 2px; width: 12px; height: 12px; }

/* windows */
.window {
  position: absolute;
  display: flex;
  flex-direction: column;
  background: #fff;
}
.back { inset: 94px 57px 43px 180px; color: #777; }
.front {
  inset: 119px 30px 16px 205px;
  border: 1px solid #fff;
  border-bottom: 0;
  box-shadow: 0 0 5px rgba(0, 0, 0, .12);
}
.titlebar { display: flex; align-items: center; height: 30px; padding-bottom: 1px; flex: none; }
.qat { display: flex; align-items: center; gap: 7px; padding-left: 9px; width: 103px; }
.bar { width: 1px; height: 12px; background: #999; }
.title { margin: 0 0 0 6px; font-size: 11px; font-weight: 400; }
.back .title { margin-left: 13px; color: #999; }
.manage {
  align-self: flex-start;
  width: 119px;
  height: 22px;
  margin: 3px 0 0 126px;
  background: #e9cbfb;
  color: #3d2b49;
  line-height: 27px;
  text-align: center;
}
.controls { display: flex; margin-left: auto; color: #111; }
.back .controls { color: #999; }
.controls button { display: grid; place-items: center; width: 46px; height: 30px; }

.tabs { display: flex; height: 23px; flex: none; }
.tabs > button { padding: 0 15px; }
.tabs .file { width: 56px; padding: 0; background: #0063b1; color: #fff; }
.tabs .on { width: 58px; height: 24px; border: 1px solid #dcdddf; border-bottom: 0; background: #f5f6f7; margin-bottom: -1px; padding: 0 0 2px; position: relative; }
.tab-end { display: flex; align-items: center; gap: 7px; margin-left: auto; padding: 0 3px 2px 0; }
.tab-end .i16 { width: 12px; height: 12px; }
.help { width: 16px; height: 16px; border-radius: 50%; background: #0a63b8; color: #fff; font-weight: 700; line-height: 16px; }

.ribbon {
  display: flex;
  flex: none;
  padding: 3px 0 1px;
  border-top: 1px solid #dcdddf;
  border-bottom: 1px solid #dcdddf;
  background: #f5f6f7;
}
.group { border-right: 1px solid #dcdddf; }
.g-clip { width: 263px; }
.g-org { width: 191px; }
.g-new { width: 145px; }
.g-open { width: 133px; }
.g-sel { width: 115px; }
.group-body { display: flex; height: 71px; }
.group-body.first { padding-left: 3px; }
.g-sel .group-body { padding-left: 6px; }
.group-label { line-height: 16px; text-align: center; color: #444; }
.big {
  display: flex;
  flex-direction: column;
  flex: none;
  align-items: center;
  gap: 3px;
  width: 48px;
  padding-top: 4px;
  line-height: 13px;
  white-space: nowrap;
}
.pinq { width: 72px; }
.w36 { width: 36px; }
.w64 { width: 64px; }
.tri {
  display: inline-block;
  vertical-align: middle;
  border: 3px solid transparent;
  border-top-color: #222;
  border-bottom: 0;
}
.inner-sep { width: 1px; height: 54px; margin: 7px 0 0 7px; background: #dcdddf; }
.smalls { padding-left: 1px; }
.smalls button { display: flex; align-items: center; gap: 3px; height: 22px; white-space: nowrap; }
.smalls .dim { color: #7b7b7b; }

.address { display: flex; align-items: center; height: 34px; flex: none; padding: 0 12px 0 11px; }
.nav-btn { display: grid; place-items: center; width: 16px; height: 16px; margin-right: 14px; color: #555; }
.nav-btn.off { color: #c4c4c4; }
.nav-btn .i16 { width: 14px; height: 14px; }
.flip svg { transform: rotate(180deg); }
.turn svg { transform: rotate(90deg); }
.nav-btn.flip { margin-right: 8px; }
.nav-btn.recent { margin-right: 4px; }
.nav-btn.turn { margin-right: 5px; }
.crumbs {
  display: flex;
  flex: 1;
  align-items: center;
  height: 22px;
  padding: 0 0 1px 3px;
  border: 1px solid #d9d9d9;
}
.crumbs .i16 { width: 14px; }
.crumbs .sep { width: 8px; height: 16px; margin: 0 7px; color: #555; }
.search { display: flex; align-items: center; width: 200px; height: 22px; margin-left: 8px; padding: 0 6px; border: 1px solid #d9d9d9; color: #444; }
.search input { flex: 1; min-width: 0; border: 0; outline: 0; padding: 0; background: none; }
.search .i16 { width: 14px; height: 14px; }
.search input::placeholder { color: #767676; }

.content { display: flex; flex: 1; min-height: 0; }
.tree { width: 140px; padding-top: 9px; overflow: hidden; flex: none; }
.tree a { display: flex; align-items: center; gap: 5px; height: 24px; padding: 0 2px 1px 0; margin-right: 1px; }
.tree .l0 { padding-left: 24px; }
.tree .l1 { padding-left: 32px; }
.tree .l2 { padding-left: 40px; }
.tree .l3 { padding-left: 48px; }
.tree .gap { margin-top: 8px; }
.tree .sel { background: #d9d9d9; }
.tree .pinned { margin-left: auto; }
.scroll { display: flex; flex-direction: column; align-items: center; width: 16px; margin-top: 1px; background: #f0f0f0; color: #333; flex: none; }
.scroll svg { width: 17px; height: 17px; }
.down { transform: rotate(180deg); margin-top: auto; }
.thumb { width: 16px; background: #cdcdcd; }
.tree-thumb { height: 110px; }
.list-thumb { height: 216px; margin-top: auto; }
.list-thumb + .down { margin-top: 0; }
.list { flex: 1; min-width: 0; margin: 1px 0 0 2px; padding-left: 15px; border-left: 1px solid #f4f4f4; overflow: hidden; }
.list table { width: 598px; table-layout: fixed; border-collapse: separate; border-spacing: 0; }
.list th { height: 25px; padding: 0 6px; border-right: 1px solid #e5e5e5; font-weight: 400; text-align: left; color: #4c607a; }
.list th.c-name { position: relative; width: 258px; padding: 0 3px; }
.c-date { width: 144px; }
.c-type { width: 96px; }
.sort { position: absolute; left: 123px; top: 1px; width: 9px; height: 5px; color: #555; }
.list td { height: 21px; padding: 0 6px; line-height: 15px; color: #6d6d6d; white-space: nowrap; }
.list td[colspan] { height: 5px; }
.list td:nth-child(4) { padding-right: 5px; text-align: right; }
.list td.c-name { color: #111; padding: 0 0 0 5px; }
.list td.c-name svg { display: inline-block; vertical-align: middle; margin-right: 3px; }
.sliver { display: flex; align-items: flex-end; height: 5px; padding-bottom: 3px; overflow: hidden; }
.list .sel td { background: #cce8ff; border: 1px solid #99d1ff; border-width: 1px 0; line-height: 13px; }
.list .sel td:first-child { box-shadow: inset 1px 0 #99d1ff; }

.status { display: flex; align-items: center; gap: 21px; height: 24px; flex: none; padding: 0 8px 1px 14px; color: #2b4266; }
.views { display: flex; align-items: center; gap: 4px; margin-left: auto; }
.views .on { display: grid; place-items: center; width: 22px; height: 22px; border: 1px solid #3c9bd8; background: #cdeaf8; }
.back-body { display: flex; flex: 1; align-items: flex-end; padding-bottom: 2px; }
.back-sel { flex: 1; height: 24px; background: #d9d9d9; }

/* context menu */
.menu {
  position: absolute;
  left: 673px;
  top: 256px;
  width: 497px;
  padding: 4px 10px;
  border: 1px solid #a0a0a0;
  background: #eee;
  color: #000;
}
.menu button { display: flex; align-items: center; width: 100%; height: 22px; padding: 0 0 1px 24px; text-align: left; }
.menu .i16 { margin: 0 8px 0 -24px; }
.menu hr { height: 1px; margin: 3px 0; border: 0; background: #919191; }
.menu .arrow { width: 8px; height: 16px; margin-left: auto; }

.watermark {
  position: absolute;
  right: 50px;
  bottom: 8px;
  display: flex;
  align-items: center;
  gap: 3px;
  color: rgba(255, 255, 255, .75);
  font: 31px/40px "Liberation Sans Narrow", "Liberation Sans", sans-serif;
  text-shadow: 0 0 3px rgba(0, 0, 0, .45);
  opacity: .6;
  pointer-events: none;
}
.watermark svg { width: 56px; height: 64px; filter: drop-shadow(0 0 2px rgba(0, 0, 0, .45)); }

/* taskbar */
.taskbar { display: flex; height: 40px; flex: none; background: linear-gradient(90deg, #001923, #00131f 50%, #000716); color: #fff; }
.start { display: grid; place-items: center; width: 48px; }
.tsearch { display: flex; align-items: center; width: 288px; padding-left: 12px; border-bottom: 1px solid #bbb; background: #f2f2f2; color: #222; }
.tsearch .lens { width: 18px; height: 18px; margin-right: 10px; }
.tsearch input { flex: 1; min-width: 0; padding: 2px 0 0; border: 0; outline: 0; background: none; font-size: 14px; line-height: 20px; }
.tsearch input::placeholder { color: #3b3b3b; opacity: 1; }
.art { width: 74px; height: 40px; }
.tb { display: grid; place-items: center; width: 48px; }
.tb.wide { width: 52px; }
.tb.active { background: #34454f; border-bottom: 2px solid #76b9ed; box-shadow: inset -4px 0 #22313b; }
.tb.running { width: 40px; margin-left: 6px; border-bottom: 2px solid #76b9ed; }
.tray { display: flex; align-items: center; margin-left: auto; }
.tray button { display: grid; place-items: center; width: 24px; height: 40px; }
.clock { display: flex; flex-direction: column; align-items: center; width: 64px; line-height: 18px; }
.tray .note { width: 40px; }
.show-desktop { width: 5px; height: 40px; margin-left: 8px; border-left: 1px solid #556; }
```
